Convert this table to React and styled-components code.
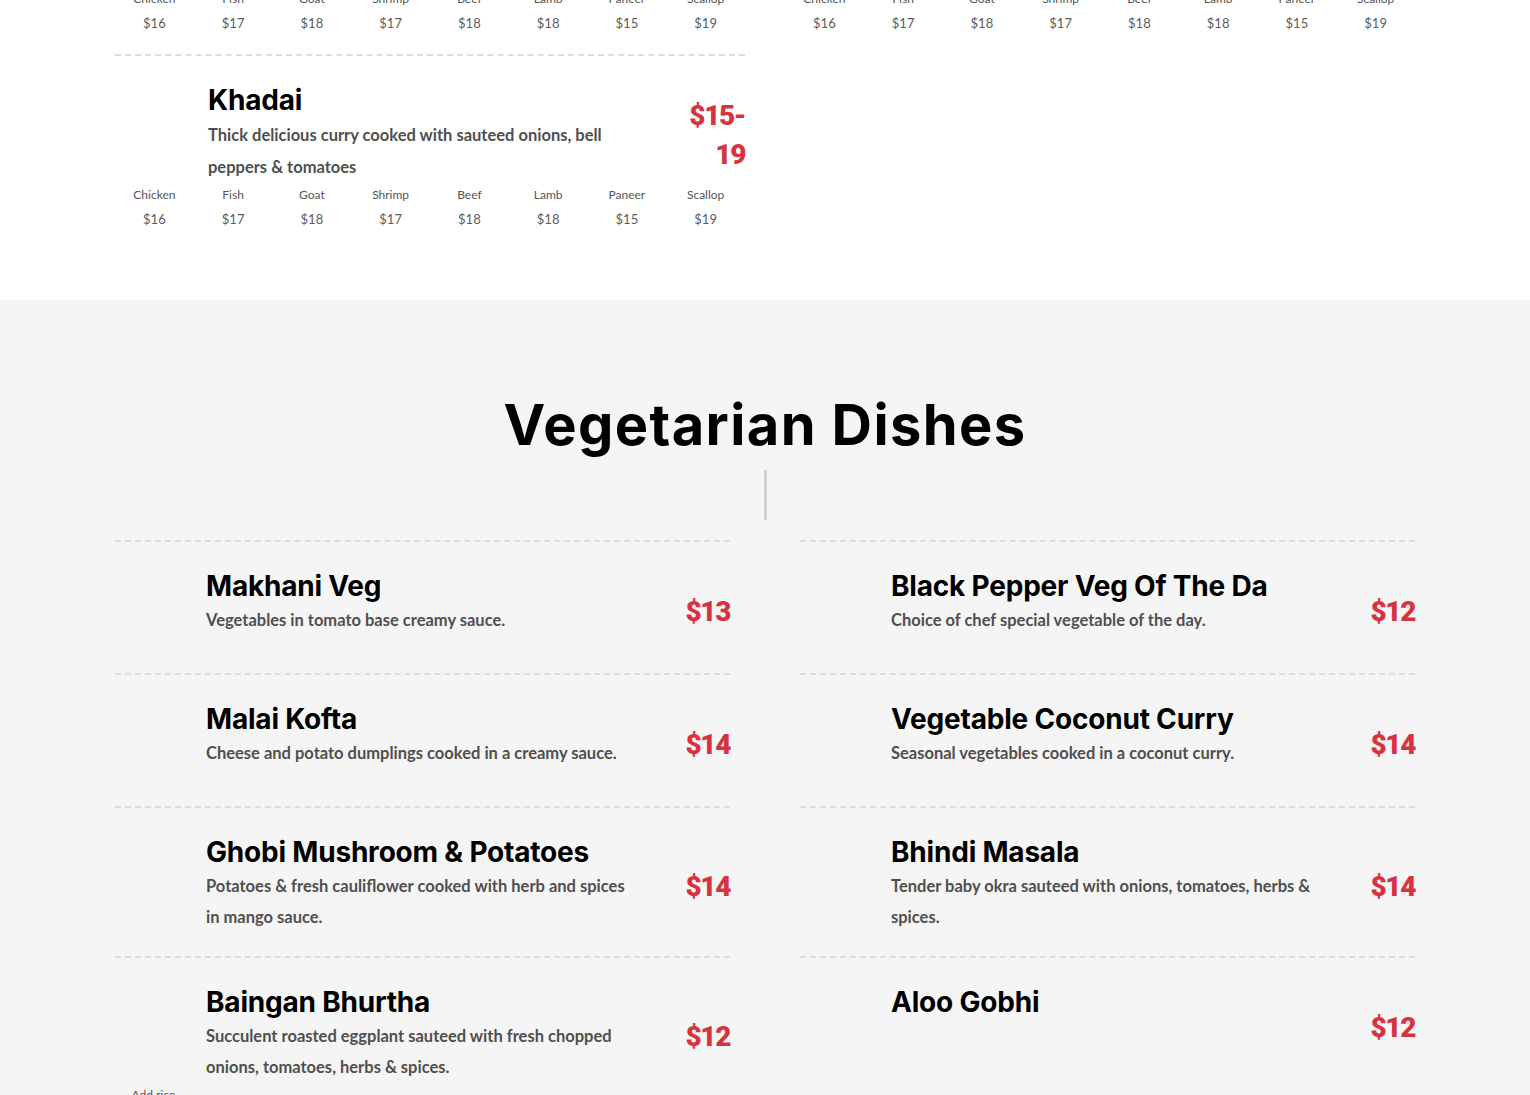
import React from 'react';
import styled, { createGlobalStyle } from 'styled-components';

const GlobalStyle = createGlobalStyle`
  body {
    margin: 0;
    background: #ffffff;
    font-family: 'Lato', 'Noto Sans', sans-serif;
    overflow: hidden;
  }
`;

const variants = [
  ['Chicken', '$16'],
  ['Fish', '$17'],
  ['Goat', '$18'],
  ['Shrimp', '$17'],
  ['Beef', '$18'],
  ['Lamb', '$18'],
  ['Paneer', '$15'],
  ['Scallop', '$19'],
];

const vegDishes = [
  { name: 'Makhani Veg', desc: 'Vegetables in tomato base creamy sauce.', price: '$13' },
  { name: 'Black Pepper Veg Of The Da', desc: 'Choice of chef special vegetable of the day.', price: '$12' },
  { name: 'Malai Kofta', desc: 'Cheese and potato dumplings cooked in a creamy sauce.', price: '$14' },
  { name: 'Vegetable Coconut Curry', desc: 'Seasonal vegetables cooked in a coconut curry.', price: '$14' },
  { name: 'Ghobi Mushroom & Potatoes', desc: 'Potatoes & fresh cauliflower cooked with herb and spices in mango sauce.', price: '$14' },
  { name: 'Bhindi Masala', desc: 'Tender baby okra sauteed with onions, tomatoes, herbs & spices.', price: '$14' },
  {
    name: 'Baingan Bhurtha',
    desc: 'Succulent roasted eggplant sauteed with fresh chopped onions, tomatoes, herbs & spices.',
    price: '$12',
    options: [['Add rice', '']],
  },
  { name: 'Aloo Gobhi', desc: '', price: '$12' },
];

const TopSection = styled.section`
  background: #ffffff;
  margin-top: -13px;
  padding: 0 115px 49px;
  display: grid;
  grid-template-columns: 630px 630px;
  column-gap: 40px;
  align-items: start;
`;

const Column = styled.div`
  display: flex;
  flex-direction: column;
`;

const Spacer = styled.div`
  height: 19px;
`;

const VegSection = styled.section`
  background: #f5f5f5;
  padding: 93px 115px 40px;
  display: flex;
  flex-direction: column;
  align-items: center;
`;

const Heading = styled.h2`
  margin: 0;
  font-family: 'Inter', 'Noto Sans', sans-serif;
  font-weight: 700;
  font-size: 56px;
  line-height: 65px;
  letter-spacing: 1.4px;
  color: #000;
`;

const Divider = styled.div`
  width: 3px;
  height: 50px;
  margin: 12px 0 20px;
  background: #d2d2d2;
`;

const VegGrid = styled.div`
  align-self: stretch;
  display: grid;
  grid-template-columns: 615px 615px;
  column-gap: 70px;
`;

const Item = styled.div`
  border-top: 2px dashed #dddddd;
  padding: 25px 0 ${(p) => (p.$compact ? '20px' : '23px')};
`;

const ItemRow = styled.div`
  display: flex;
  align-items: flex-start;
  min-height: 83px;
`;

const Thumb = styled.div`
  flex: 0 0 ${(p) => p.$w}px;
`;

const Body = styled.div`
  flex: 1;
  min-width: 0;
  padding-right: 50px;
`;

const Title = styled.h3`
  margin: 0;
  font-family: 'Inter', 'Noto Sans', sans-serif;
  font-weight: 700;
  font-size: 28px;
  line-height: 38px;
  letter-spacing: -0.2px;
  color: #000;
`;

const Desc = styled.p`
  margin: 0;
  font-family: 'Lato', 'Noto Sans', sans-serif;
  font-weight: 700;
  font-size: 16.5px;
  line-height: ${(p) => p.$lh}px;
  color: #4f4f4f;
`;

const Price = styled.div`
  align-self: center;
  margin-top: 6px;
  max-width: 62px;
  text-align: right;
  font-family: 'Roboto', 'Liberation Sans', sans-serif;
  font-weight: 900;
  font-size: 28px;
  line-height: 39px;
  letter-spacing: -1.4px;
  color: #d9323f;
`;

const Options = styled.div`
  display: grid;
  grid-template-columns: repeat(8, 1fr);
  text-align: center;
  font-family: 'Lato', 'Noto Sans', sans-serif;
  color: #555555;
`;

const OptionLabel = styled.div`
  font-size: 12px;
  line-height: 24px;
`;

const OptionPrice = styled.div`
  font-size: 13px;
  line-height: 24px;
  color: #5c5c5c;
`;

function OptionRow({ items }) {
  return (
    <Options>
      {items.map(([label, price], i) => (
        <div key={i}>
          <OptionLabel>{label}</OptionLabel>
          {price && <OptionPrice>{price}</OptionPrice>}
        </div>
      ))}
    </Options>
  );
}

function Dish({ name, desc, price, options, thumb = 91, lh = 31, compact }) {
  return (
    <Item $compact={compact}>
      <ItemRow>
        <Thumb $w={thumb} />
        <Body>
          <Title>{name}</Title>
          {desc && <Desc $lh={lh}>{desc}</Desc>}
        </Body>
        <Price>{price}</Price>
      </ItemRow>
      {options && <OptionRow items={options} />}
    </Item>
  );
}

export default function App() {
  return (
    <>
      <GlobalStyle />
      <TopSection>
        <Column>
          <OptionRow items={variants} />
          <Spacer />
          <Dish
            name="Khadai"
            desc="Thick delicious curry cooked with sauteed onions, bell peppers & tomatoes"
            price="$15-19"
            options={variants}
            thumb={93}
            lh={32}
            compact
          />
        </Column>
        <Column>
          <OptionRow items={variants} />
        </Column>
      </TopSection>
      <VegSection>
        <Heading>Vegetarian Dishes</Heading>
        <Divider />
        <VegGrid>
          {vegDishes.map((d) => (
            <Dish key={d.name} {...d} />
          ))}
        </VegGrid>
      </VegSection>
    </>
  );
}
